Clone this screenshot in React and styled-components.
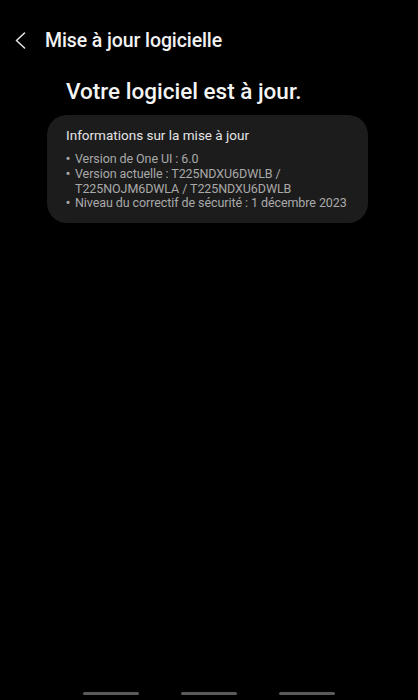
import React from "react";
import styled, { createGlobalStyle } from "styled-components";

const Global = createGlobalStyle`
  html, body {
    margin: 0;
    padding: 0;
    background: #000;
  }
  body {
    font-family: Roboto, "Noto Sans", sans-serif;
    color: #fff;
  }
`;

const Screen = styled.div`
  display: flex;
  flex-direction: column;
  min-height: 100vh;
  background: #000;
`;

const Header = styled.div`
  display: flex;
  align-items: center;
  height: 40px;
  margin-top: 20px;
  padding-left: 15px;
`;

const BackButton = styled.button`
  display: flex;
  align-items: center;
  background: none;
  border: 0;
  padding: 0;
  margin-right: 19px;
  cursor: pointer;
`;

const HeaderTitle = styled.h1`
  margin: 0;
  font-size: 19.5px;
  font-weight: 500;
  color: #f2f2f2;
  letter-spacing: -0.1px;
`;

const Status = styled.h2`
  margin: 18px 0 0 66px;
  font-size: 22.5px;
  font-weight: 500;
  color: #f4f4f4;
  letter-spacing: 0;
`;

const Card = styled.section`
  margin: 11px 50px 0 47px;
  padding: 11px 12px 12px 19px;
  background: #1c1c1c;
  border-radius: 20px;
`;

const CardTitle = styled.div`
  font-size: 13.5px;
  color: #e4e4e4;
  line-height: 18px;
  margin-bottom: 8px;
`;

const List = styled.ul`
  list-style: none;
  margin: 0;
  padding: 0;
`;

const Item = styled.li`
  position: relative;
  padding-left: 9px;
  font-size: 12.5px;
  line-height: 14.8px;
  letter-spacing: -0.08px;
  color: #a9a9a9;

  &::before {
    content: "•";
    position: absolute;
    left: -0.5px;
    font-size: 15px;
  }
`;

const NavBar = styled.div`
  margin-top: auto;
  display: flex;
  justify-content: center;
  gap: 42px;
  padding-bottom: 5px;
`;

const NavPill = styled.div`
  width: 56px;
  height: 3px;
  border-radius: 2px;
  background: #5a5a5a;
`;

const Chevron = () => (
  <svg width="11" height="17" viewBox="0 0 11 17" fill="none">
    <polyline
      points="9.5,1 1.5,8.5 9.5,16"
      stroke="#e8e8e8"
      strokeWidth="1.5"
      strokeLinecap="round"
      strokeLinejoin="round"
    />
  </svg>
);

const items = [
  "Version de One UI : 6.0",
  "Version actuelle : T225NDXU6DWLB / T225NOJM6DWLA / T225NDXU6DWLB",
  "Niveau du correctif de sécurité : 1 décembre 2023",
];

export default function App() {
  return (
    <Screen>
      <Global />
      <Header>
        <BackButton aria-label="Retour">
          <Chevron />
        </BackButton>
        <HeaderTitle>Mise à jour logicielle</HeaderTitle>
      </Header>
      <Status>Votre logiciel est à jour.</Status>
      <Card>
        <CardTitle>Informations sur la mise à jour</CardTitle>
        <List>
          {items.map((t) => (
            <Item key={t}>{t}</Item>
          ))}
        </List>
      </Card>
      <NavBar>
        <NavPill />
        <NavPill />
        <NavPill />
      </NavBar>
    </Screen>
  );
}
